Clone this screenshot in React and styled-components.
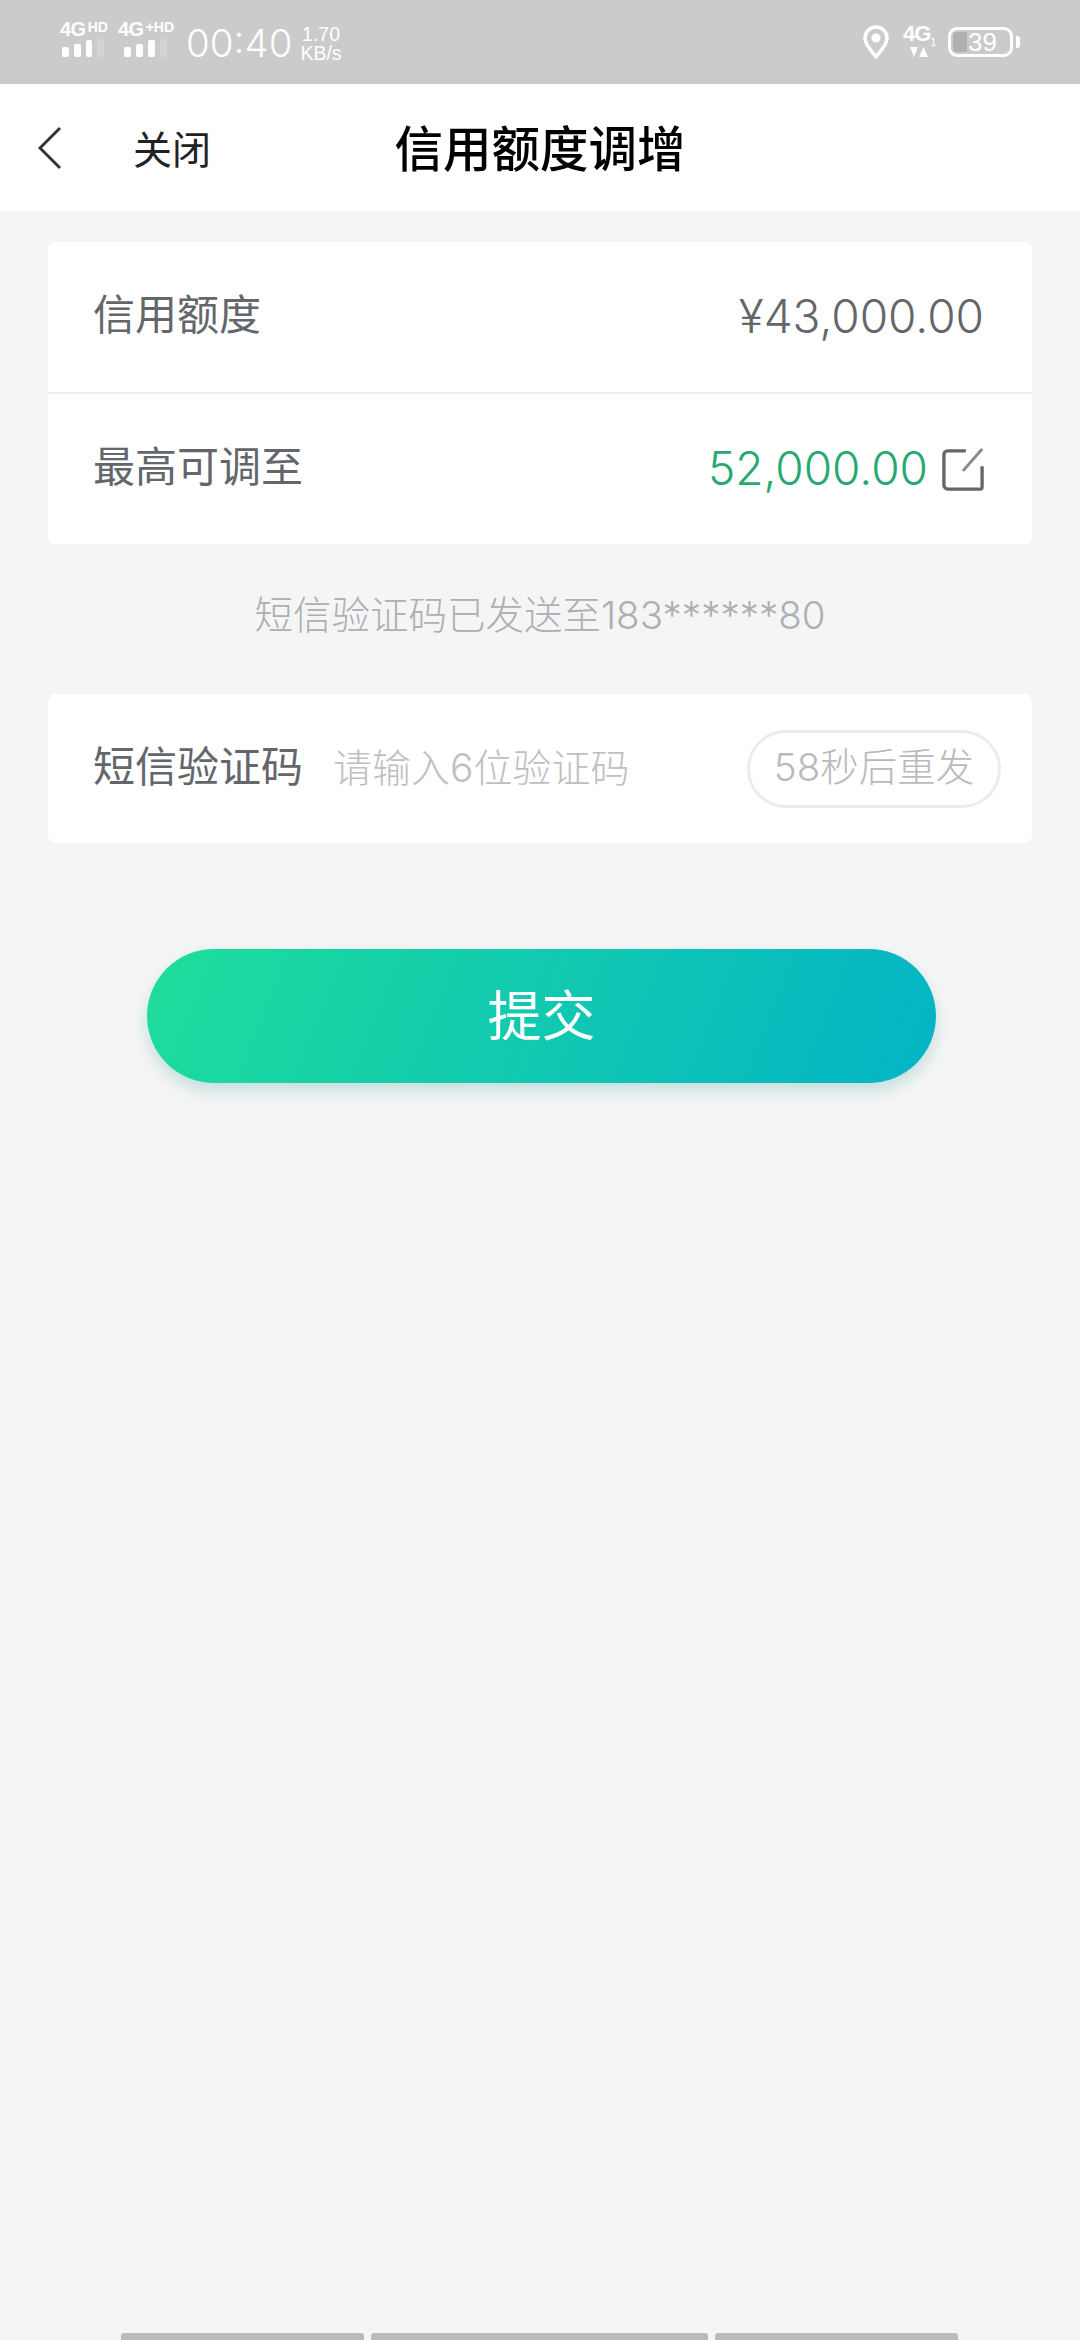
import styled, { createGlobalStyle } from 'styled-components'

const Global = createGlobalStyle`
  html, body { margin: 0; padding: 0; background: #f5f5f5; }
  * { box-sizing: border-box; }
`

const CJK = `"Liberation Sans", "Noto Sans CJK SC", sans-serif`
const LIGHT = `Inter, "Noto Sans CJK SC", sans-serif`

const Page = styled.div`
  width: 1080px;
  min-height: 2340px;
  display: flex;
  flex-direction: column;
  background: #f5f5f5;
  font-family: ${CJK};
  overflow: hidden;
`

const StatusBar = styled.div`
  height: 84px;
  background: #cbcbcb;
  color: #fff;
  display: flex;
  align-items: center;
  justify-content: space-between;
  padding: 0 67px 0 60px;
`

const StatusGroup = styled.div`
  display: flex;
  align-items: center;
`

const Net = styled.div`
  width: ${p => p.$w}px;
  margin-right: 14px;
  display: flex;
  flex-direction: column;
  margin-top: -8px;
`

const NetLabel = styled.div`
  font-size: 20px;
  line-height: 20px;
  font-weight: 700;
  white-space: nowrap;
  letter-spacing: -0.5px;
  sup {
    font-size: 14px;
    line-height: 0;
    vertical-align: 4px;
    margin-left: 2px;
    letter-spacing: 0;
  }
`

const Bars = styled.div`
  display: flex;
  align-items: flex-end;
  gap: 5px;
  height: 18px;
  margin-left: ${p => p.$ml}px;
`

const Bar = styled.span`
  width: 7px;
  height: ${p => p.$h}px;
  border-radius: 2px;
  background: ${p => (p.$off ? 'rgba(255,255,255,0.2)' : '#fff')};
`

const Clock = styled.div`
  font-size: 38.5px;
  line-height: 84px;
  font-family: Inter, sans-serif;
  font-weight: 300;
  margin-top: 2px;
`

const Speed = styled.div`
  margin-left: 8px;
  font-size: 19.5px;
  line-height: 19px;
  text-align: center;
  margin-top: 3px;
`

const Pin = styled.svg`
  width: 26px;
  height: 34px;
  margin-right: 13px;
`

const DataBox = styled.div`
  width: 34px;
  margin-right: 12px;
  display: flex;
  flex-direction: column;
  align-items: center;
  margin-top: -4px;
`

const DataLabel = styled.div`
  font-size: 22px;
  line-height: 22px;
  font-weight: 700;
  letter-spacing: -1px;
  white-space: nowrap;
  sub {
    font-size: 10px;
    line-height: 0;
    font-weight: 400;
  }
`

const Arrows = styled.svg`
  width: 18px;
  height: 10px;
  margin-top: 2px;
`

const Battery = styled.div`
  position: relative;
  width: 65px;
  height: 30px;
  border: 3px solid #fff;
  border-radius: 9px;
  display: flex;
  align-items: center;
  justify-content: center;
  font-size: 26px;
  padding-left: 4px;
  &::before {
    content: '';
    position: absolute;
    left: 2px;
    top: 2px;
    bottom: 2px;
    width: 14px;
    background: #b0b0b0;
    border-radius: 4px 0 0 4px;
  }
  &::after {
    content: '';
    position: absolute;
    right: -10px;
    top: 6px;
    width: 4px;
    height: 12px;
    background: #fff;
    border-radius: 0 3px 3px 0;
  }
  span { position: relative; }
`

const NavBar = styled.div`
  height: 127px;
  background: #fff;
  display: grid;
  grid-template-columns: 1fr auto 1fr;
  align-items: center;
`

const NavLeft = styled.div`
  display: flex;
  align-items: center;
  padding-left: 38px;
`

const BackIcon = styled.svg`
  width: 24px;
  height: 44px;
  margin-right: 71px;
`

const CloseText = styled.span`
  font-size: 39px;
  color: #222;
  margin-bottom: 2px;
`

const Title = styled.h1`
  margin: 0 0 3px;
  font-size: 48.5px;
  font-weight: 500;
  color: #000;
`

const Card = styled.div`
  margin: ${p => p.$mt}px 48px 0;
  background: #fff;
  border-radius: 8px;
`

const Row = styled.div`
  height: ${p => p.$h}px;
  display: flex;
  align-items: center;
  justify-content: space-between;
  padding: 0 48px 0 45px;
  & + & { border-top: 2px solid #eeeeee; }
`

const Label = styled.span`
  font-size: 42px;
  line-height: 50px;
  margin-bottom: 2px;
  color: #63666b;
  flex-shrink: 0;
`

const Value = styled.span`
  display: flex;
  align-items: center;
  font-family: Inter, sans-serif;
  font-weight: 300;
  font-size: 46px;
  margin-bottom: 3px;
  color: ${p => p.$color};
`

const EditIcon = styled.svg`
  width: 42px;
  height: 44px;
  margin: 2px 0 0 14px;
`

const Notice = styled.div`
  margin-top: 45px;
  text-align: center;
  font-family: ${LIGHT};
  font-weight: 300;
  font-size: 38.5px;
  line-height: 52px;
  color: #acafb4;
`

const CodeRow = styled.div`
  height: 149px;
  display: flex;
  align-items: center;
  padding: 0 31px 0 45px;
`

const CodeInput = styled.input`
  flex: 1;
  min-width: 0;
  margin: 0 0 2px 30px;
  border: none;
  outline: none;
  background: none;
  font-family: ${LIGHT};
  font-weight: 300;
  font-size: 39px;
  padding: 0;
  &::placeholder { color: #bfbfbf; opacity: 1; }
`

const Resend = styled.button`
  width: 254px;
  height: 78px;
  flex-shrink: 0;
  border: 3px solid #ececec;
  border-radius: 39px;
  background: #fff;
  color: #bababa;
  font-family: ${LIGHT};
  font-weight: 300;
  font-size: 38.5px;
  padding: 0 0 10px;
  white-space: nowrap;
`

const Submit = styled.button`
  display: block;
  width: 789px;
  height: 134px;
  margin: 106px 0 0 147px;
  border: none;
  border-radius: 67px;
  background: linear-gradient(112deg, #1fdd9b 0%, #04b4c6 100%);
  box-shadow: 0 8px 16px rgba(8, 130, 130, 0.2);
  color: #fff;
  font-family: ${CJK};
  font-size: 54px;
  padding: 0 0 8px;
`

const BottomNav = styled.div`
  margin-top: auto;
  height: 7px;
  padding-left: 121px;
  display: flex;
  gap: 7px;
`

const NavSegment = styled.span`
  width: ${p => p.$w}px;
  background: #bababa;
  border-radius: 3px 3px 0 0;
`

const Signal = ({ ml }) => (
  <Bars $ml={ml}>
    <Bar $h={10} />
    <Bar $h={13} />
    <Bar $h={17} />
    <Bar $h={18} $off />
  </Bars>
)

const App = () => {
  return (
    <Page>
      <Global />
      <StatusBar>
        <StatusGroup>
          <Net $w={44}>
            <NetLabel>4G<sup>HD</sup></NetLabel>
            <Signal ml={2} />
          </Net>
          <Net $w={54}>
            <NetLabel>4G<sup>+HD</sup></NetLabel>
            <Signal ml={6} />
          </Net>
          <Clock>00:40</Clock>
          <Speed>1.70<br />KB/s</Speed>
        </StatusGroup>
        <StatusGroup>
          <Pin viewBox="0 0 26 34">
            <path
              d="M13 2a11 11 0 0 1 11 11c0 7-6 12-11 19C8 25 2 20 2 13A11 11 0 0 1 13 2z"
              fill="none"
              stroke="#fff"
              strokeWidth="3.5"
            />
            <circle cx="13" cy="13" r="4.5" fill="#fff" />
          </Pin>
          <DataBox>
            <DataLabel>4G<sub>1</sub></DataLabel>
            <Arrows viewBox="0 0 18 10">
              <path d="M0 0h8L4 10zM9 10h9l-4.500-10z" fill="#fff" />
            </Arrows>
          </DataBox>
          <Battery><span>39</span></Battery>
        </StatusGroup>
      </StatusBar>

      <NavBar>
        <NavLeft>
          <BackIcon viewBox="0 0 24 44">
            <path d="M22 2 2 22l20 20" fill="none" stroke="#333" strokeWidth="3" />
          </BackIcon>
          <CloseText>关闭</CloseText>
        </NavLeft>
        <Title>信用额度调增</Title>
      </NavBar>

      <Card $mt={31}>
        <Row $h={150}>
          <Label>信用额度</Label>
          <Value $color="#63666b">¥43,000.00</Value>
        </Row>
        <Row $h={152}>
          <Label>最高可调至</Label>
          <Value $color="#27a872">
            52,000.00
            <EditIcon viewBox="0 0 44 46">
              <path
                d="M25 4H6a4 4 0 0 0-4 4v32a4 4 0 0 0 4 4h34a2 2 0 0 0 2-2V20"
                fill="none"
                stroke="#63666b"
                strokeWidth="3.5"
              />
              <path d="M22 25 42 2" fill="none" stroke="#85888c" strokeWidth="3" />
            </EditIcon>
          </Value>
        </Row>
      </Card>

      <Notice>短信验证码已发送至183******80</Notice>

      <Card $mt={53}>
        <CodeRow>
          <Label>短信验证码</Label>
          <CodeInput placeholder="请输入6位验证码" />
          <Resend>58秒后重发</Resend>
        </CodeRow>
      </Card>

      <Submit>提交</Submit>

      <BottomNav>
        <NavSegment $w={243} />
        <NavSegment $w={337} />
        <NavSegment $w={243} />
      </BottomNav>
    </Page>
  )
}

export default App
